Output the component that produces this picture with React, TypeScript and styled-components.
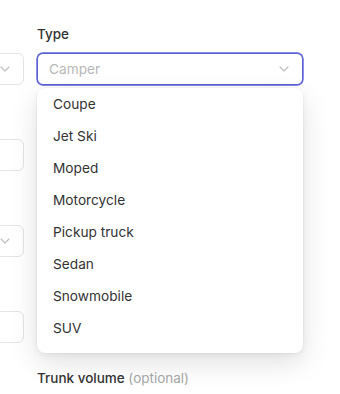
import React from "react";
import styled, { createGlobalStyle } from "styled-components";

const Global = createGlobalStyle`
  html, body { margin: 0; padding: 0; background: #ffffff; overflow: hidden; }
  body { font-family: Inter, "Noto Sans", "Liberation Sans", sans-serif; -webkit-font-smoothing: antialiased; }
  * { box-sizing: border-box; }
`;

const Form = styled.div`
  display: grid;
  grid-template-columns: 266px 266px;
  column-gap: 13px;
  row-gap: 25px;
  margin-left: -242px;
  padding-top: 24px;
  width: 545px;
`;

const Field = styled.div`
  display: flex;
  flex-direction: column;
  gap: 9px;
`;

const Label = styled.label`
  font-size: 13.5px;
  line-height: 20px;
  font-weight: 500;
  color: #333333;
`;

const Optional = styled.span`
  font-weight: 400;
  color: #a8a8a8;
`;

const SelectWrap = styled.div`
  position: relative;
`;

const Control = styled.div<{ $focused?: boolean }>`
  position: relative;
  height: 32px;
  border-radius: 6px;
  background: #fff;
  border: 1px solid ${(p) => (p.$focused ? "#5b60d6" : "#e4e4e4")};
  box-shadow: ${(p) => (p.$focused ? "0 0 0 0.7px #5b60d6" : "none")};
  display: flex;
  align-items: center;
  padding: 0 11px;
  font-size: 13.7px;
  color: #333;
`;

const Placeholder = styled.span`
  color: #b8b8b8;
  flex: 1;
`;

const Chevron = styled.svg`
  position: absolute;
  right: 13px;
  top: 50%;
  margin-top: -3px;
  width: 10px;
  height: 6px;
`;

const Menu = styled.ul`
  position: absolute;
  left: 0;
  right: 0;
  top: calc(100% + 3px);
  margin: 0;
  padding: 0 0 9px;
  list-style: none;
  background: #fff;
  border-radius: 8px;
  box-shadow: 0 10px 28px rgba(0, 0, 0, 0.12), 0 2px 6px rgba(0, 0, 0, 0.05), 0 0 0 1px rgba(0, 0, 0, 0.025);
  z-index: 10;
`;

const Option = styled.li`
  height: 32px;
  display: flex;
  align-items: center;
  padding: 0 16px;
  font-size: 13.7px;
  color: #333333;
`;

const ChevronIcon = () => (
  <Chevron viewBox="0 0 10 6" fill="none">
    <path d="M1 1l4 4 4-4" stroke="#bdbdbd" strokeWidth="1.1" strokeLinecap="round" strokeLinejoin="round" />
  </Chevron>
);

const options = ["Coupe", "Jet Ski", "Moped", "Motorcycle", "Pickup truck", "Sedan", "Snowmobile", "SUV"];

export default function App() {
  return (
    <>
      <Global />
      <Form>
        <Field>
          <Label>Make</Label>
          <Control>
            <Placeholder>Select</Placeholder>
            <ChevronIcon />
          </Control>
        </Field>
        <Field>
          <Label>Type</Label>
          <SelectWrap>
            <Control $focused>
              <Placeholder>Camper</Placeholder>
              <ChevronIcon />
            </Control>
            <Menu>
              {options.map((o) => (
                <Option key={o}>{o}</Option>
              ))}
            </Menu>
          </SelectWrap>
        </Field>
        <Field>
          <Label>Model</Label>
          <Control />
        </Field>
        <Field>
          <Label>Color</Label>
          <Control />
        </Field>
        <Field>
          <Label>Fuel</Label>
          <Control>
            <Placeholder>Select</Placeholder>
            <ChevronIcon />
          </Control>
        </Field>
        <Field>
          <Label>Seats</Label>
          <Control />
        </Field>
        <Field>
          <Label>Mileage</Label>
          <Control />
        </Field>
        <Field>
          <Label>Doors</Label>
          <Control />
        </Field>
        <Field>
          <Label>Weight</Label>
          <Control />
        </Field>
        <Field>
          <Label>
            Trunk volume <Optional>(optional)</Optional>
          </Label>
          <Control />
        </Field>
      </Form>
    </>
  );
}
